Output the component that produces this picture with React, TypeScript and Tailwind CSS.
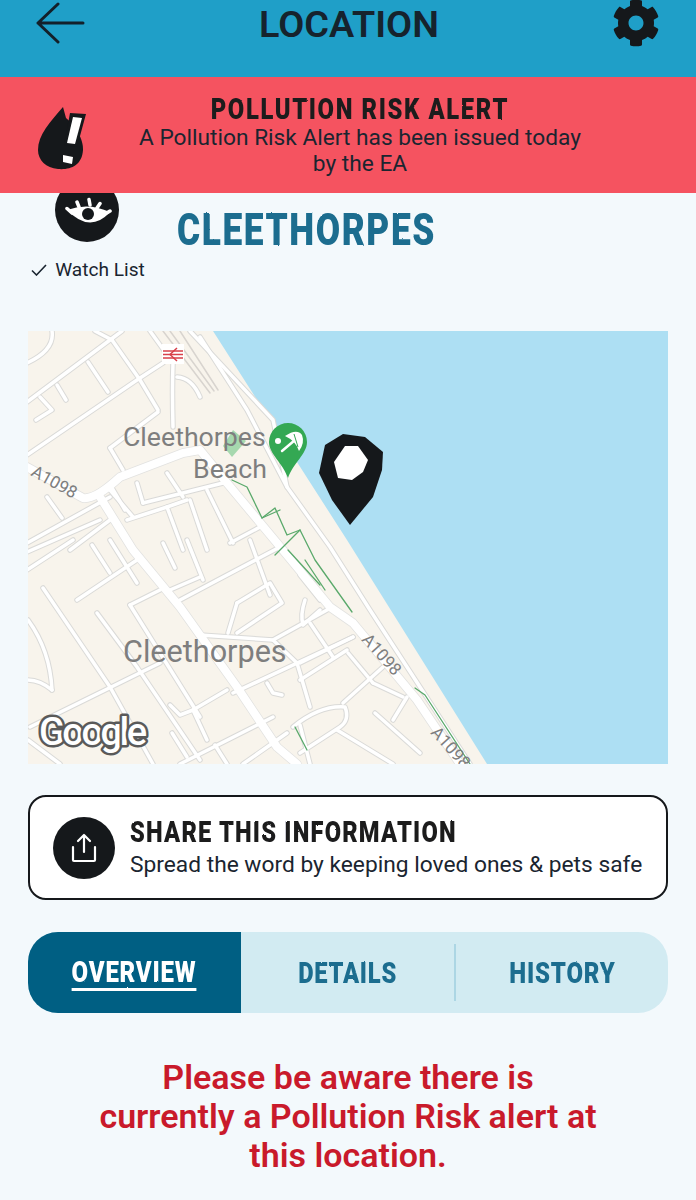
import React from "react";
import { FaCog } from "react-icons/fa";

const thin = [
  "M27 402L110 340L122 331", "M27 455L137 380L163 363", "M112 340L140 380L158 410", "M95 331L112 340", "M150 331L173 363Q172 390 173 427",
  "M177 377Q192 378 200 397", "M190 331L273 420L287 487", "M200 337L247 410L287 487L330 547L370 610L420 687L470 764", "M110 448L123 470", "M137 483L143 503",
  "M167 473L183 497", "M143 503L223 483", "M127 520L167 507L187 500", "M167 507L183 550", "M190 500L207 550", "M207 490L233 543", "M230 543L260 527",
  "M27 543L110 497", "M47 497L62 518", "M27 552L100 520", "M110 520L70 550", "M110 490L133 517", "M27 570L73 540", "M43 588L110 687L153 764", "M97 613L137 667L200 760",
  "M77 600L137 560", "M92 545L110 573", "M110 540L137 583", "M163 543L175 568", "M130 605L200 717", "M130 605L160 590", "M180 600L280 547", "M170 590L200 577",
  "M187 540L203 580", "M237 603L270 583L282 603L237 633", "M237 603L228 633", "M200 635L273 640L327 610", "M273 640L297 663L310 707", "M30 727L160 663",
  "M233 693L353 637", "M300 663L353 637", "M300 680L347 650", "M193 710L227 690", "M170 705L180 715L193 710", "M193 710L207 740", "M267 683L273 693L282 695",
  "M310 623L333 657", "M348 653L373 683", "M373 683L403 697", "M343 703L383 667", "M293 727Q320 705 345 707Q350 720 340 727L300 753", "M337 730L393 764", "M375 713L420 753",
  "M393 720L407 697", "M172 733L187 757", "M180 764L273 717", "M243 764L287 733", "M28 620Q50 650 52 690", "M27 680Q40 680 52 690", "M305 600Q300 615 303 625L320 610",
  "M40 397L52 410L36 420", "M57 385L66 400", "M88 362L108 392", "M125 510L112 488", "M270 595L250 540", "M320 600L300 575", "M28 740L60 764", "M215 745L227 764",
  "M300 725L310 764", "M27 363Q55 350 52 331", "M110 448L158 412",
];
const wide = [
  "M27 467L83 498Q95 500 120 477L183 453L200 450L227 483L277 543L330 607L353 623L417 700L460 764",
  "M100 497L133 550L180 607L237 687L277 747L297 764",
];
const green = [
  "M232 480L247 487L262 518L275 508L287 535L300 530L315 560L352 612", "M262 518L280 510", "M300 530L275 555", "M288 550L320 585", "M415 688L425 695L470 764",
  "M295 727L307 750", "M305 560L325 590",
];
const rail = ["M163 331L210 393", "M170 331L214 391", "M180 331L218 390"];

const display = "inline-block font-['Roboto',sans-serif] font-black whitespace-nowrap [filter:url(#grunge)]";

function MapView() {
  return (
    <svg viewBox="28 331 640 433" className="block h-[433px] w-[640px]">
      <rect x="28" y="331" width="640" height="433" fill="#f8f4ec" />
      <polygon points="213,331 270,420 347,540 487,764 668,764 668,331" fill="#addff3" />
      <g fill="none" strokeLinecap="round" strokeLinejoin="round">
        {thin.map((d) => <path key={d} d={d} stroke="#dadad8" strokeWidth="5.500" />)}
        {wide.map((d) => <path key={d} d={d} stroke="#e2e2e0" strokeWidth="9.500" />)}
        {thin.map((d) => <path key={d} d={d} stroke="#ffffff" strokeWidth="3.500" />)}
        {wide.map((d) => <path key={d} d={d} stroke="#ffffff" strokeWidth="8" />)}
        {rail.map((d) => <path key={d} d={d} stroke="#d8d4cf" strokeWidth="1.500" />)}
        {green.map((d) => <path key={d} d={d} stroke="#5aa96b" strokeWidth="1.300" />)}
      </g>
      <polygon points="233,430 246,441 232,457 223,446" fill="#a6d8ae" />
      <rect x="162" y="344" width="22" height="20" fill="#ffffff" />
      <g stroke="#d8404a" strokeWidth="1.500" fill="none">
        <path d="M163 351H183M163 354.500H183M163 358H183" />
        <path d="M177 348L170 354.500L177 361" />
      </g>
      <g fontFamily="Roboto, sans-serif" fill="#7e7e7e">
        <text x="123" y="446" fontSize="26.700">Cleethorpes</text>
        <text x="193" y="478" fontSize="26.700">Beach</text>
        <text x="123" y="662" fontSize="30.600">Cleethorpes</text>
        <text transform="translate(30 475) rotate(29)" fontSize="17">A1098</text>
        <text transform="translate(361 640) rotate(48)" fontSize="17">A1098</text>
        <text transform="translate(430 733) rotate(48)" fontSize="17">A1098</text>
      </g>
      <path d="M288 423a19 19 0 0 1 19 19c0 12-14 21-19 36c-5-15-19-24-19-36a19 19 0 0 1 19-19z" fill="#34a853" />
      <path d="M282 451L295 440" stroke="#ffffff" strokeWidth="2.500" strokeLinecap="round" />
      <path d="M285 436Q297 428 302 435Q305 443 299 451Q296 441 285 436z" fill="#ffffff" />
      <path d="M294 434L298 447" stroke="#34a853" strokeWidth="1" />
      <circle cx="278" cy="441" r="3" fill="#ffffff" />
      <polygon points="343,434 365,437 383,452 382,470 373,497 350,525 332,500 319,473 325,445" fill="#15181b" />
      <polygon points="345,446 358,446 368,460 363,472 352,480 338,478 334,462" fill="#ffffff" />
      <text x="39" y="745" fontFamily="Roboto, sans-serif" fontSize="38" fontWeight="500" fill="#ffffff" stroke="#5a5a5a" strokeWidth="5" strokeLinejoin="round" className="[paint-order:stroke]" textLength="108">Google</text>
    </svg>
  );
}

export default function App() {
  return (
    <div className="flex h-[1200px] w-[696px] flex-col overflow-hidden bg-[#f3f9fc] font-['Roboto',sans-serif] text-[#1a2530]">
      <svg className="h-0 w-0" aria-hidden="true">
        <filter id="grunge" x="-5%" y="-10%" width="110%" height="120%">
          <feTurbulence type="fractalNoise" baseFrequency="0.35" numOctaves="2" seed="4" />
          <feDisplacementMap in="SourceGraphic" scale="1.800" />
        </filter>
      </svg>

      <header className="flex h-[77px] shrink-0 items-start justify-between bg-[#1f9fc8] pl-[36px] pr-[36px]">
        <svg width="50" height="44" viewBox="0 0 50 44" className="mt-[2px]" fill="none" stroke="#13202a" strokeWidth="3" strokeLinecap="round" strokeLinejoin="round">
          <path d="M2 21H47M22 2L2 21L22 40" />
        </svg>
        <h1 className="mt-[2px] text-[37.800px] leading-[44px] font-semibold text-[#16232d]">LOCATION</h1>
        <FaCog className="mt-[-1px] text-[48px] text-[#15181b]" />
      </header>

      <section className="relative z-10 flex h-[116px] shrink-0 items-center bg-[#f55360] pl-[38px]">
        <svg width="50" height="64" viewBox="38 107 50 64" className="mt-[8px] shrink-0">
          <path d="M63 107C50 122 38 135 38 150C38 160 46 168 58 169C70 170 82 166 83 150C84 140 75 125 66 118z" fill="#15181b" />
          <polygon points="70,113 86,114 77,147 64,145" fill="#15181b" />
          <polygon points="73,117 82,118 75,144 67,143" fill="#ffffff" />
          <polygon points="63,155 73,157 72,164 63,162" fill="#ffffff" />
        </svg>
        <div className="ml-[12px] flex w-[520px] flex-col items-center">
          <div className={`${display} scale-x-[0.82] text-[29px] leading-[32px] tracking-[2px] text-[#1b1b1d]`}>POLLUTION RISK ALERT</div>
          <p className="text-center text-[22.700px] leading-[26px] text-[#1a2530]">A Pollution Risk Alert has been issued today<br />by the EA</p>
        </div>
      </section>

      <main className="flex flex-1 flex-col px-7">
        <div className="mt-[-15px] flex h-[153px] shrink-0 items-start">
          <div className="flex w-[120px] shrink-0 flex-col items-center">
            <div className="mr-[2px] flex h-16 w-16 items-center justify-center rounded-full bg-[#15181b]">
              <svg width="47" height="28" viewBox="0 0 47 28" className="mt-[2px] ml-[3px]">
                <path d="M2 13Q23 5 45 15Q25 37 2 13z" fill="#ffffff" />
                <g stroke="#ffffff" strokeWidth="3.500" strokeLinecap="round">
                  <path d="M12 5L14 10M24 2.500L25 8M35 6.500L32 11M45 14L40 17M2 11.500L7 16" />
                </g>
                <circle cx="23" cy="17" r="6" fill="#15181b" />
              </svg>
            </div>
            <div className="mt-[16px] flex items-center gap-[8px]">
              <svg width="16" height="12" viewBox="0 0 16 12" fill="none" stroke="#1a2530" strokeWidth="1.600"><path d="M1 6.500L5.500 11L15 1" /></svg>
              <span className="text-[19.100px] leading-[24px]">Watch List</span>
            </div>
          </div>
          <h2 className={`${display} mt-[27px] ml-[29px] origin-left scale-x-[0.785] text-[45px] leading-[50px] tracking-[2px] text-[#1b6d8f]`}>CLEETHORPES</h2>
        </div>

        <MapView />

        <button className="mt-[31px] flex h-[105px] w-[640px] shrink-0 items-center rounded-[18px] border-2 border-[#15181b] bg-white pl-[23px] text-left">
          <span className="flex h-[62px] w-[62px] shrink-0 items-center justify-center rounded-full bg-[#15181b]">
            <svg width="26" height="30" viewBox="0 0 26 30" fill="none" stroke="#ffffff" strokeWidth="2.200" strokeLinecap="round" strokeLinejoin="round">
              <path d="M13 19V2M7 8L13 2L19 8M2 14V27Q2 28 3 28H23Q24 28 24 27V14" />
            </svg>
          </span>
          <span className="ml-[15px] flex flex-col items-start">
            <span className={`${display} origin-left scale-x-[0.815] text-[29px] leading-[30px] tracking-[1.500px] text-[#1b1b1d]`}>SHARE THIS INFORMATION</span>
            <span className="mt-[4px] text-[22.750px] leading-[28px] text-[#1a2530]">Spread the word by keeping loved ones &amp; pets safe</span>
          </span>
        </button>

        <nav className="mt-[32px] flex h-[81px] w-[640px] shrink-0 overflow-hidden rounded-[30px] bg-[#d2ebf2]">
          <div className="flex w-[213px] items-center justify-center bg-[#005f83] text-white">
            <span className={`${display} mt-[2px] scale-x-[0.8] border-b-[3px] border-white pb-[1px] text-[30px] leading-[30px] tracking-[1px]`}>OVERVIEW</span>
          </div>
          <div className="flex w-[213px] items-center justify-center text-[#1b6d8f]">
            <span className={`${display} scale-x-[0.79] text-[30px] leading-[30px] tracking-[1px]`}>DETAILS</span>
          </div>
          <div className="my-3 w-[2px] bg-[#acd6e4]" />
          <div className="flex flex-1 items-center justify-center text-[#1b6d8f]">
            <span className={`${display} scale-x-[0.8] text-[30px] leading-[30px] tracking-[1px]`}>HISTORY</span>
          </div>
        </nav>

        <p className="mt-[45px] text-center text-[34px] leading-[39px] font-semibold text-[#c91a2b]">
          Please be aware there is<br />currently a Pollution Risk alert at<br />this location.
        </p>
      </main>
    </div>
  );
}
